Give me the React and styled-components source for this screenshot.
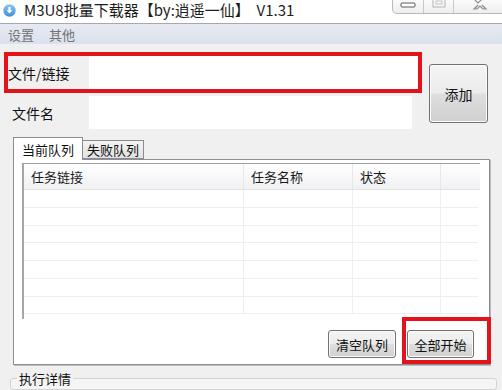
import React from 'react';
import styled, { createGlobalStyle } from 'styled-components';

const GlobalStyle = createGlobalStyle`
  html, body {
    margin: 0;
    padding: 0;
    background: #f0f0f0;
  }
  body {
    font-family: "Noto Sans CJK SC", "Noto Sans", sans-serif;
  }
  * { box-sizing: border-box; }
`;

const Window = styled.div`
  width: 502px;
  height: 390px;
  overflow: hidden;
  background: #f0f0f0;
  display: flex;
  flex-direction: column;
  color: #1a1a1a;
`;

const TitleBar = styled.div`
  height: 24px;
  flex-shrink: 0;
  background: #fff;
  border-bottom: 1px solid #a8a8a8;
  display: flex;
  align-items: flex-start;
  padding-left: 3px;
`;

const AppIcon = styled.svg`
  width: 13px;
  height: 13px;
  margin-top: 4px;
  flex-shrink: 0;
`;

const Title = styled.div`
  margin-left: 8px;
  font-size: 15px;
  line-height: 20px;
  color: #1c1c1c;
  white-space: pre;
`;

const Controls = styled.div`
  margin-left: auto;
  margin-right: -4px;
  display: flex;
  height: 14px;
  border: 1px solid #b9b9b9;
  border-top: none;
  border-radius: 0 0 5px 5px;
  background: linear-gradient(#fbfbfb, #eeeeee);
`;

const CtrlButton = styled.div`
  width: ${p => p.w}px;
  display: flex;
  align-items: flex-start;
  justify-content: center;
  border-left: ${p => (p.first ? 'none' : '1px solid #c8c8c8')};
`;

const MenuBar = styled.div`
  height: 21px;
  flex-shrink: 0;
  display: flex;
  align-items: center;
  padding-left: 8px;
  gap: 15px;
  background: linear-gradient(#e6eaf3, #dbe1ed);
  border-bottom: 1px solid #eef0f5;
`;

const MenuItem = styled.span`
  font-size: 13px;
  color: #737373;
`;

const Form = styled.div`
  display: flex;
  align-items: flex-start;
  padding: 11px 0 0 4px;
`;

const Fields = styled.div`
  display: flex;
  flex-direction: column;
  gap: 7px;
`;

const Row = styled.div`
  position: relative;
  display: flex;
  align-items: center;
  height: 33px;
`;

const Label = styled.div`
  width: 85px;
  padding-left: ${p => p.indent}px;
  font-size: 14px;
  color: #111;
`;

const Input = styled.div`
  width: ${p => p.w}px;
  height: 33px;
  background: #fff;
`;

const Highlight = styled.div`
  position: absolute;
  top: ${p => p.t}px;
  left: ${p => p.l}px;
  right: ${p => p.r}px;
  bottom: ${p => p.b}px;
  border: 4px solid #e3131b;
  pointer-events: none;
`;

const Button = styled.button`
  width: ${p => p.w}px;
  height: ${p => p.h}px;
  padding: 0;
  border: 1px solid #717171;
  border-radius: 3px;
  background: linear-gradient(#f4f4f4 0%, #ececec 48%, #dedede 52%, #d0d0d0 100%);
  box-shadow: inset 0 0 0 1px #fbfbfb;
  font-family: inherit;
  font-size: ${p => p.fs}px;
  color: #111;
`;

const AddButton = styled(Button)`
  margin: 8px 0 0 11px;
`;

const TabStrip = styled.div`
  display: flex;
  align-items: flex-end;
  height: 22px;
  margin: 8px 0 0 13px;
`;

const Tab = styled.div`
  position: relative;
  z-index: ${p => (p.active ? 1 : 0)};
  height: ${p => (p.active ? 23 : 19)}px;
  margin-bottom: ${p => (p.active ? -1 : 0)}px;
  padding: 0 ${p => (p.active ? 8 : 4)}px 0 ${p => (p.active ? 8 : 4)}px;
  display: flex;
  align-items: center;
  font-size: 13px;
  color: #111;
  border: 1px solid #898c95;
  border-bottom: ${p => (p.active ? 'none' : '1px solid #898c95')};
  border-left: ${p => (p.active ? '1px solid #898c95' : 'none')};
  background: ${p => (p.active ? '#fff' : 'linear-gradient(#f3f3f3, #e2e2e2)')};
`;

const Panel = styled.div`
  margin-left: 13px;
  width: 477px;
  height: 206px;
  flex-shrink: 0;
  background: #fff;
  border: 1px solid #8c8e94;
  box-shadow: 1px 1px 0 #bcbcbc;
  padding: 3px 0 0 8px;
`;

const List = styled.div`
  width: 458px;
  height: 156px;
  border-top: 1px solid #a0a0a0;
  border-left: 2px solid #a6a6a6;
`;

const HeaderRow = styled.div`
  display: flex;
  height: 26px;
  background: linear-gradient(#ffffff, #f0f1f3);
  border-bottom: 1px solid #e2e2e2;
`;

const HeaderCell = styled.div`
  width: ${p => p.w}px;
  padding-left: 7px;
  display: flex;
  align-items: center;
  font-size: 13px;
  color: #1a1a1a;
  border-right: ${p => (p.last ? 'none' : '1px solid #e8e8e8')};
`;

const DataRow = styled.div`
  display: flex;
  height: 17.75px;
  border-bottom: 1px solid #eeeeee;
  width: 454px;
`;

const DataCell = styled.div`
  width: ${p => p.w}px;
  border-right: ${p => (p.last ? 'none' : '1px solid #eeeeee')};
`;

const ButtonRow = styled.div`
  display: flex;
  justify-content: flex-end;
  gap: 11px;
  padding: 11px 15px 0 0;
`;

const Marked = styled.div`
  position: relative;
`;

const GroupBox = styled.fieldset`
  margin: 5px 5px 0 10px;
  padding: 0 6px;
  height: 40px;
  border: 1px solid #d2d2d2;
  border-radius: 3px;
  background: #f5f5f5;
`;

const Legend = styled.legend`
  padding: 0 2px;
  font-size: 13px;
  line-height: 17px;
  color: #111;
`;

const columns = [
  { title: '任务链接', w: 220 },
  { title: '任务名称', w: 109 },
  { title: '状态', w: 88 },
  { title: '', w: 37 },
];

const App = () => {
  return (
    <Window>
      <GlobalStyle />
      <TitleBar>
        <AppIcon viewBox="0 0 13 13">
          <defs>
            <linearGradient id="ig" x1="0" y1="0" x2="0" y2="1">
              <stop offset="0" stopColor="#8cc4f2" />
              <stop offset="1" stopColor="#3f8fd8" />
            </linearGradient>
          </defs>
          <circle cx="6.5" cy="6.5" r="6.2" fill="url(#ig)" />
          <path d="M5.4 3h2.2v3.3h1.8L6.5 9.6 3.6 6.3h1.8z" fill="#fff" />
        </AppIcon>
        <Title>M3U8批量下载器【by:逍遥一仙】  V1.31</Title>
        <Controls>
          <CtrlButton w={30} first>
            <svg width="16" height="8" viewBox="0 0 16 8">
              <rect x="1" y="3" width="14" height="4" rx="1" fill="#fff" stroke="#5a5a5a" />
            </svg>
          </CtrlButton>
          <CtrlButton w={30}>
            <svg width="14" height="8" viewBox="0 0 14 8">
              <rect x="1" y="-3" width="12" height="10" fill="none" stroke="#b4b4b4" />
              <rect x="4" y="1" width="6" height="3" fill="none" stroke="#c4c4c4" />
            </svg>
          </CtrlButton>
          <CtrlButton w={52}>
            <svg width="16" height="10" viewBox="0 0 16 10">
              <path d="M2 -1l4 4 4 -4M6 5l-4 4h3l3-3 3 3h3l-4-4" fill="none" stroke="#8e8e8e" strokeWidth="1.2" />
            </svg>
          </CtrlButton>
        </Controls>
      </TitleBar>

      <MenuBar>
        <MenuItem>设置</MenuItem>
        <MenuItem>其他</MenuItem>
      </MenuBar>

      <Form>
        <Fields>
          <Row>
            <Label indent={4}>文件/链接</Label>
            <Input w={329} />
            <Highlight t={-4} l={0} r={-4} b={-4} />
          </Row>
          <Row>
            <Label indent={8}>文件名</Label>
            <Input w={323} />
          </Row>
        </Fields>
        <AddButton w={59} h={59} fs={14}>添加</AddButton>
      </Form>

      <TabStrip>
        <Tab active>当前队列</Tab>
        <Tab>失败队列</Tab>
      </TabStrip>
      <Panel>
        <List>
          <HeaderRow>
            {columns.map((c, i) => (
              <HeaderCell key={i} w={c.w} last={i === columns.length - 1}>
                {c.title}
              </HeaderCell>
            ))}
          </HeaderRow>
          {Array.from({ length: 7 }).map((_, r) => (
            <DataRow key={r}>
              {columns.map((c, i) => (
                <DataCell key={i} w={c.w} last={i === columns.length - 1} />
              ))}
            </DataRow>
          ))}
        </List>
        <ButtonRow>
          <Button w={68} h={28} fs={13}>清空队列</Button>
          <Marked>
            <Button w={67} h={28} fs={13}>全部开始</Button>
            <Highlight t={-13} l={-5} r={-17} b={-6} />
          </Marked>
        </ButtonRow>
      </Panel>

      <GroupBox>
        <Legend>执行详情</Legend>
      </GroupBox>
    </Window>
  );
};

export default App;
